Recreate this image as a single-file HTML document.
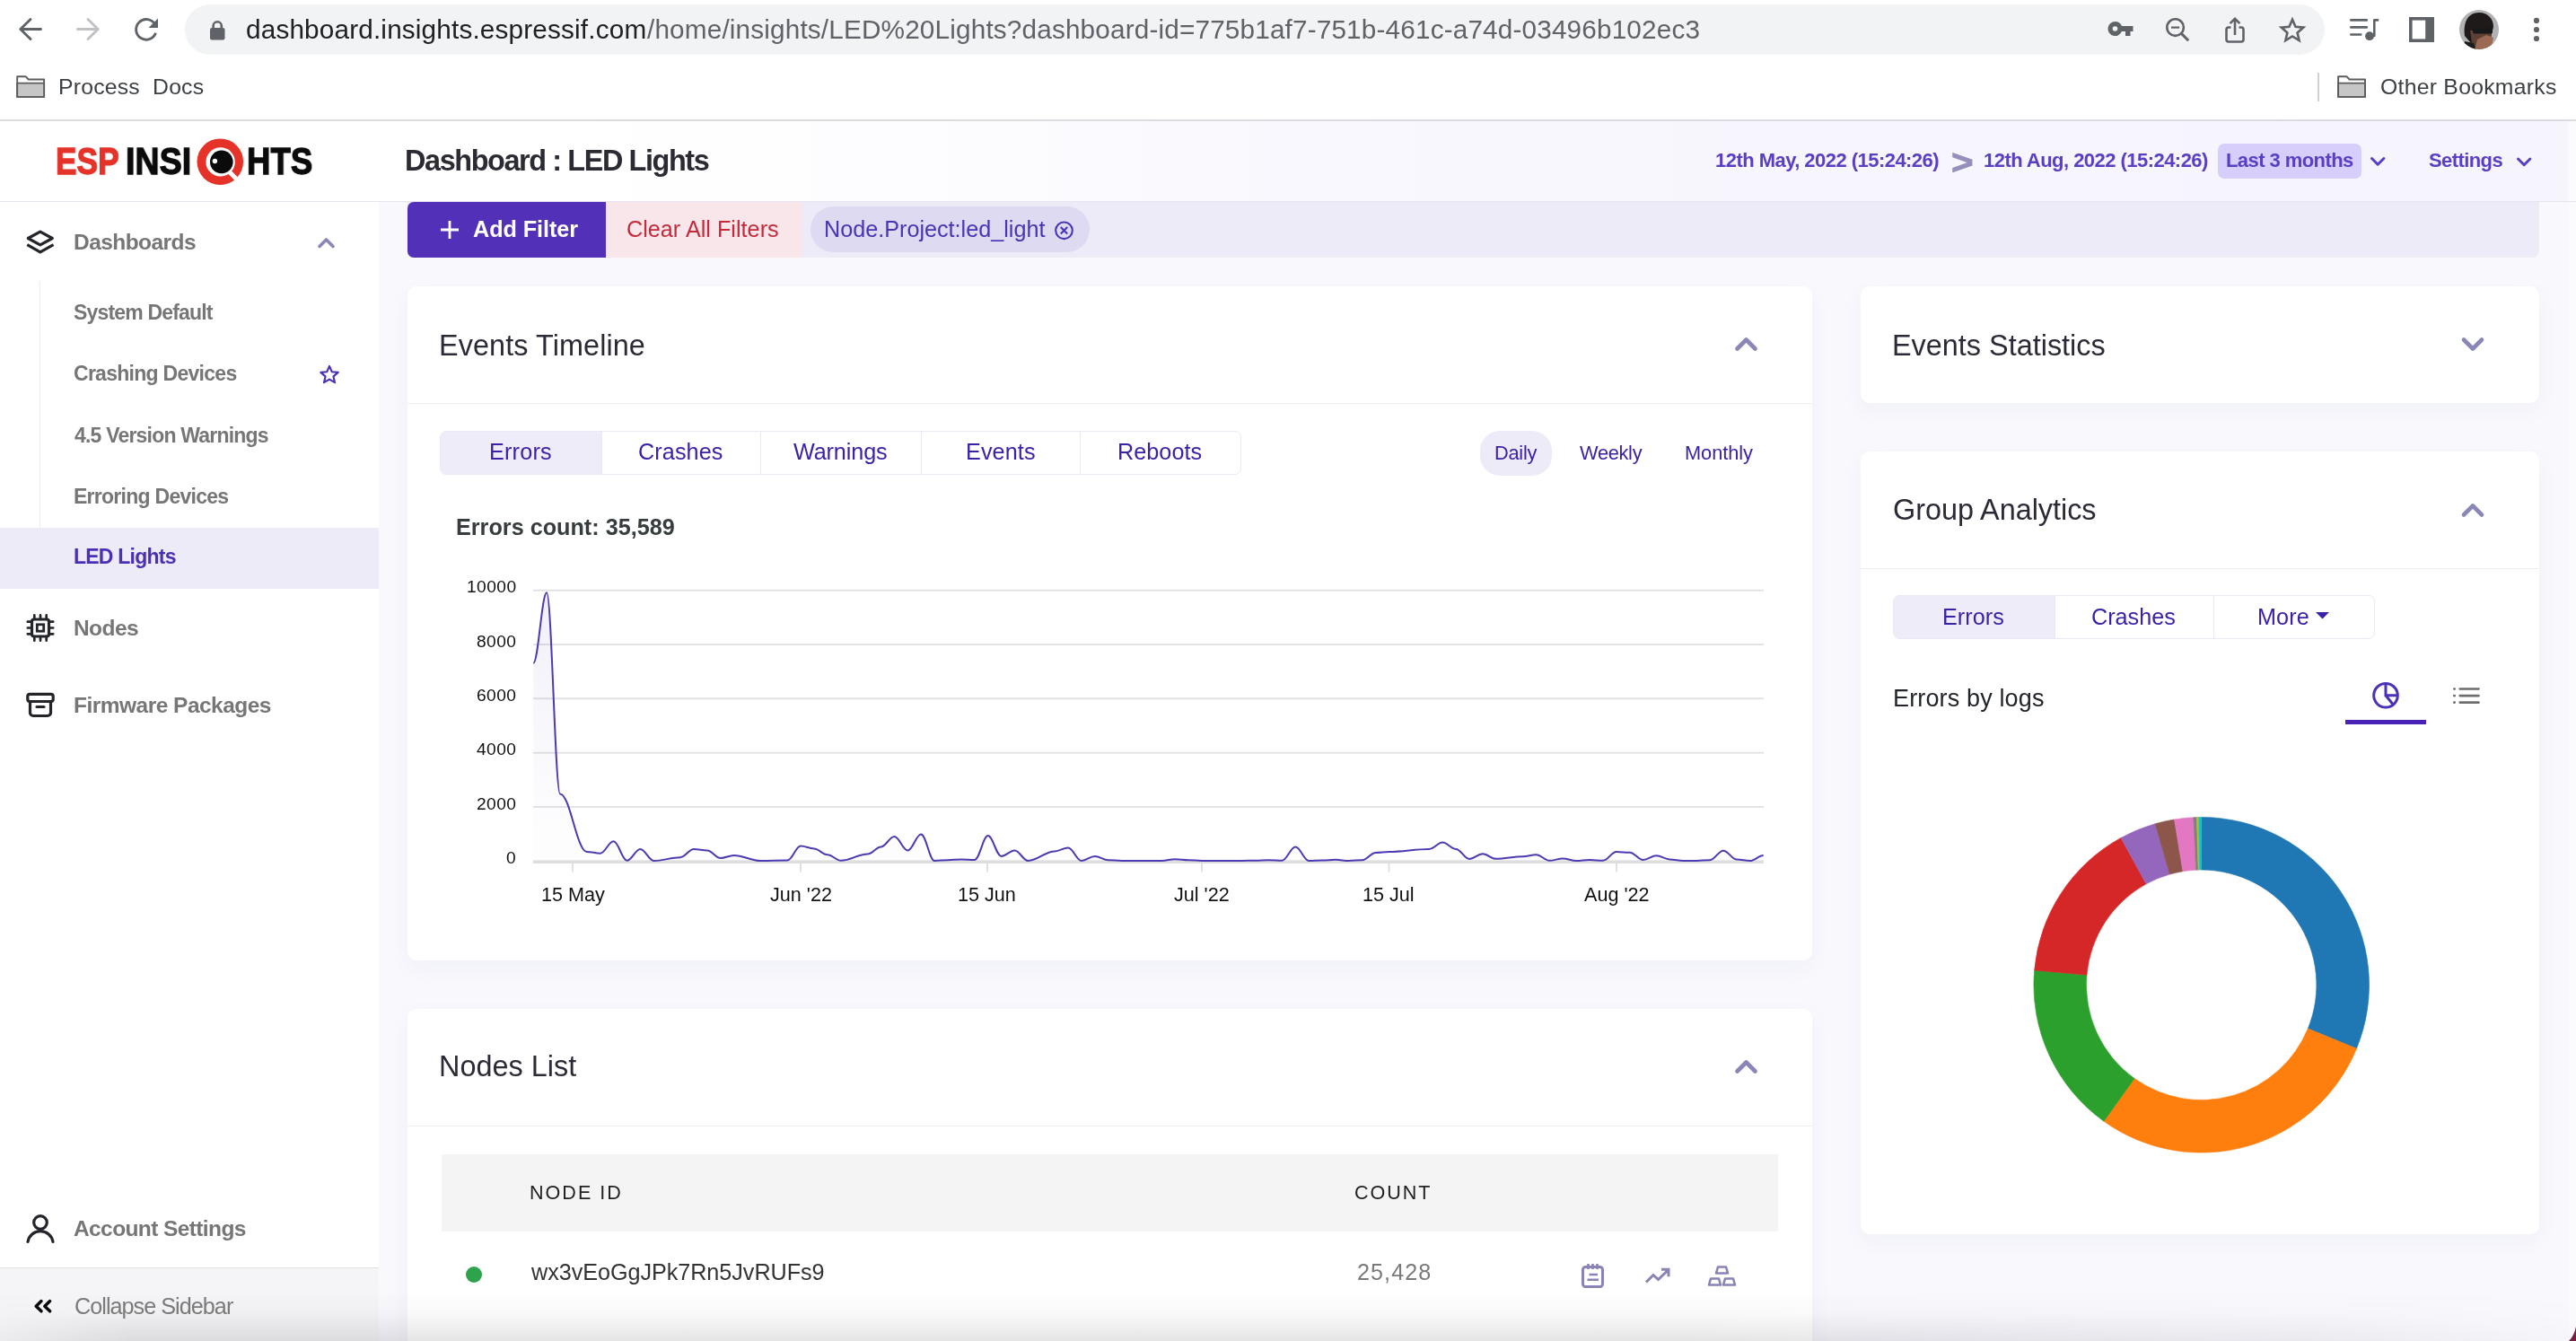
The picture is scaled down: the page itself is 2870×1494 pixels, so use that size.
<!DOCTYPE html>
<html lang="en">
<head>
<meta charset="utf-8">
<title>ESP Insights - Dashboard : LED Lights</title>
<style>
*{box-sizing:border-box}
html,body{margin:0;padding:0;width:2870px;height:1494px;overflow:hidden;background:#f8f8fd}
body{font-family:"Liberation Sans",sans-serif;position:relative}
.abs,.b,.t{position:absolute}
.t{white-space:pre;line-height:1;transform-origin:0 50%;will-change:transform}
.card{position:absolute;background:#fff;border-radius:10px;box-shadow:0 8px 26px rgba(60,60,130,.038)}
.hr{position:absolute;height:1px;background:#efeef5}
.tabs{position:absolute;border:1px solid #ebeaf3;border-radius:7px;background:#fff;overflow:hidden}
.tabs i{position:absolute;top:0;bottom:0;width:1px;background:#ebeaf4}
.tabs b{position:absolute;left:0;top:0;bottom:0;background:#eeecf9}
</style>
</head>
<body>
<!-- browser chrome -->
<div class="b" style="left:0;top:0;width:2870px;height:134px;background:#fff"></div>
<div class="b" style="left:206px;top:5px;width:2384px;height:56px;border-radius:28px;background:#f1f3f4"></div>
<div class="b" style="left:0;top:133px;width:2870px;height:2px;background:#dcdcde"></div>
<div class="b" style="left:2582px;top:81px;width:2px;height:32px;background:#d0d0d0"></div>

<!-- app header -->
<div class="b" style="left:0;top:135px;width:2870px;height:90px;background:linear-gradient(90deg,#fff 0,#fff 600px,#fdfdff 1000px,#f9f8fe 1435px,#f7f6fe 2000px,#f6f5fe 2861px,#fbfbfd 2861px)"></div>
<div class="b" style="left:0;top:223.5px;width:2870px;height:1.5px;background:#e6e5ef"></div>
<div class="b" style="left:2471px;top:160px;width:160px;height:39px;border-radius:7px;background:#d7cefb"></div>

<!-- sidebar -->
<div class="b" style="left:0;top:225px;width:422px;height:1269px;background:#fff"></div>
<div class="b" style="left:44px;top:314px;width:1px;height:274px;background:#ececf1"></div>
<div class="b" style="left:0;top:588px;width:422px;height:68px;background:#eeebf9"></div>
<div class="b" style="left:0;top:1412px;width:422px;height:82px;background:#f5f5f7;border-top:1.5px solid #e3e3e6"></div>

<!-- right gutter -->
<div class="b" style="left:2861px;top:225px;width:9px;height:1269px;background:#fbfbfe"></div>

<!-- filter bar -->
<div class="b" style="left:454px;top:225px;width:2375px;height:62px;border-radius:0 0 8px 8px;background:#edebf8"></div>
<div class="b" style="left:675px;top:225px;width:219px;height:62px;background:#f8e6ea"></div>
<div class="b" style="left:454px;top:225px;width:221px;height:62px;border-radius:7px 0 0 7px;background:#5330b8"></div>
<div class="b" style="left:903px;top:230px;width:311px;height:51px;border-radius:26px;background:#dddaf1"></div>

<!-- cards -->
<div class="card" style="left:454px;top:319px;width:1565px;height:751px"></div>
<div class="hr" style="left:454px;top:448.5px;width:1565px"></div>
<div class="tabs" style="left:490px;top:480px;width:892.5px;height:48.5px"><b style="width:179.5px"></b><i style="left:178px"></i><i style="left:356px"></i><i style="left:534.5px"></i><i style="left:712px"></i></div>
<div class="b" style="left:1649px;top:480px;width:80px;height:49.5px;border-radius:22px;background:#eeebf9"></div>

<div class="card" style="left:2073px;top:319px;width:756px;height:130px"></div>
<div class="card" style="left:2073px;top:502.5px;width:756px;height:872.5px"></div>
<div class="hr" style="left:2073px;top:632.5px;width:756px"></div>
<div class="tabs" style="left:2109px;top:663px;width:536.5px;height:48.5px"><b style="width:180px"></b><i style="left:178.5px"></i><i style="left:356px"></i></div>
<div class="b" style="left:2613px;top:802px;width:90px;height:5px;background:#4a22b5"></div>

<div class="card" style="left:454px;top:1124px;width:1565px;height:420px"></div>
<div class="hr" style="left:454px;top:1254px;width:1565px"></div>
<div class="b" style="left:492px;top:1286px;width:1489px;height:86px;background:#f4f4f5"></div>
<div class="b" style="left:519px;top:1411px;width:18px;height:18px;border-radius:50%;background:#2fa24c"></div>

<svg class="abs" style="left:0;top:0" width="2870" height="1494" viewBox="0 0 2870 1494"><defs><linearGradient id="ag" x1="0" y1="0" x2="0" y2="1"><stop offset="0" stop-color="#4a3aad" stop-opacity="0.075"/><stop offset="0.9" stop-color="#4a3aad" stop-opacity="0.01"/></linearGradient></defs><rect x="594" y="898.1" width="1371" height="1.8" fill="#e0e0e3"/><rect x="594" y="837.8" width="1371" height="1.8" fill="#e0e0e3"/><rect x="594" y="777.4" width="1371" height="1.8" fill="#e0e0e3"/><rect x="594" y="717.1" width="1371" height="1.8" fill="#e0e0e3"/><rect x="594" y="656.8" width="1371" height="1.8" fill="#e0e0e3"/><rect x="594" y="958.4" width="1371" height="3.6" fill="#dedede"/><rect x="637.1" y="961" width="1.8" height="10.5" fill="#dedede"/><rect x="891.1" y="961" width="1.8" height="10.5" fill="#dedede"/><rect x="1099.1" y="961" width="1.8" height="10.5" fill="#dedede"/><rect x="1338.1" y="961" width="1.8" height="10.5" fill="#dedede"/><rect x="1546.6" y="961" width="1.8" height="10.5" fill="#dedede"/><rect x="1800.1" y="961" width="1.8" height="10.5" fill="#dedede"/><path d="M594.2 738.8C599.7 738.8 603.6 660.3 609.1 660.3C614.6 660.3 618.5 884.4 624.0 884.4C635.0 884.4 642.8 949.0 653.8 949.0C659.3 949.0 663.2 950.7 668.7 950.7C674.2 950.7 678.1 937.3 683.6 937.3C689.1 937.3 693.0 958.7 698.5 958.7C704.0 958.7 707.9 945.9 713.4 945.9C718.9 945.9 722.8 959.0 728.3 959.0C739.3 959.0 747.0 955.2 758.1 955.2C763.6 955.2 767.4 945.9 773.0 945.9C778.5 945.9 782.3 947.5 787.9 947.5C793.4 947.5 797.2 956.0 802.8 956.0C808.3 956.0 812.1 952.9 817.7 952.9C828.7 952.9 836.4 959.0 847.4 959.0C858.5 959.0 866.2 958.6 877.2 958.6C882.8 958.6 886.6 942.6 892.1 942.6C897.7 942.6 901.5 945.5 907.0 945.5C912.5 945.5 916.4 952.3 921.9 952.3C927.4 952.3 931.3 958.8 936.8 958.8C947.9 958.8 955.6 951.5 966.6 951.5C972.1 951.5 976.0 943.4 981.5 943.4C987.0 943.4 990.9 932.1 996.4 932.1C1001.9 932.1 1005.8 947.5 1011.3 947.5C1016.8 947.5 1020.7 929.5 1026.2 929.5C1031.7 929.5 1035.6 959.0 1041.1 959.0C1046.6 959.0 1050.5 958.2 1056.0 958.2C1061.5 958.2 1065.4 957.4 1070.9 957.4C1076.4 957.4 1080.3 958.1 1085.8 958.1C1091.3 958.1 1095.2 931.1 1100.7 931.1C1106.2 931.1 1110.1 953.9 1115.6 953.9C1121.1 953.9 1125.0 947.5 1130.5 947.5C1136.0 947.5 1139.9 959.0 1145.4 959.0C1156.4 959.0 1164.1 948.4 1175.2 948.4C1180.7 948.4 1184.6 944.5 1190.1 944.5C1195.6 944.5 1199.4 959.0 1205.0 959.0C1210.5 959.0 1214.3 953.9 1219.9 953.9C1225.4 953.9 1229.2 958.2 1234.8 958.2C1240.3 958.2 1244.1 959.0 1249.7 959.0C1266.2 959.0 1277.8 959.0 1294.3 959.0C1299.9 959.0 1303.7 957.2 1309.2 957.2C1314.8 957.2 1318.6 958.2 1324.1 958.2C1329.7 958.2 1333.5 959.0 1339.0 959.0C1355.6 959.0 1367.2 959.0 1383.7 959.0C1389.2 959.0 1393.1 958.7 1398.6 958.7C1404.1 958.7 1408.0 958.2 1413.5 958.2C1419.0 958.2 1422.9 958.7 1428.4 958.7C1433.9 958.7 1437.8 943.4 1443.3 943.4C1448.8 943.4 1452.7 959.0 1458.2 959.0C1463.7 959.0 1467.6 958.6 1473.1 958.6C1478.6 958.6 1482.5 957.8 1488.0 957.8C1493.5 957.8 1497.4 959.0 1502.9 959.0C1508.4 959.0 1512.3 958.2 1517.8 958.2C1523.3 958.2 1527.2 949.9 1532.7 949.9C1538.2 949.9 1542.1 948.9 1547.6 948.9C1564.1 948.9 1575.7 945.9 1592.3 945.9C1597.8 945.9 1601.7 938.6 1607.2 938.6C1612.7 938.6 1616.6 945.9 1622.1 945.9C1627.6 945.9 1631.5 957.0 1637.0 957.0C1642.5 957.0 1646.4 951.3 1651.9 951.3C1657.4 951.3 1661.2 956.8 1666.8 956.8C1677.8 956.8 1685.5 954.3 1696.6 954.3C1702.1 954.3 1705.9 952.3 1711.5 952.3C1717.0 952.3 1720.8 958.8 1726.4 958.8C1731.9 958.8 1735.7 956.4 1741.2 956.4C1746.8 956.4 1750.6 959.0 1756.1 959.0C1761.7 959.0 1765.5 958.0 1771.0 958.0C1776.6 958.0 1780.4 958.8 1785.9 958.8C1791.5 958.8 1795.3 949.1 1800.8 949.1C1806.4 949.1 1810.2 949.7 1815.7 949.7C1821.2 949.7 1825.1 958.0 1830.6 958.0C1836.1 958.0 1840.0 953.3 1845.5 953.3C1851.0 953.3 1854.9 957.4 1860.4 957.4C1865.9 957.4 1869.8 959.0 1875.3 959.0C1880.8 959.0 1884.7 959.0 1890.2 959.0C1895.7 959.0 1899.6 958.2 1905.1 958.2C1910.6 958.2 1914.5 947.7 1920.0 947.7C1925.5 947.7 1929.4 957.6 1934.9 957.6C1940.4 957.6 1944.3 959.0 1949.8 959.0C1955.3 959.0 1959.2 953.1 1964.7 953.1L1964.7 959.0L594.2 959.0Z" fill="url(#ag)"/><path d="M594.2 738.8C599.7 738.8 603.6 660.3 609.1 660.3C614.6 660.3 618.5 884.4 624.0 884.4C635.0 884.4 642.8 949.0 653.8 949.0C659.3 949.0 663.2 950.7 668.7 950.7C674.2 950.7 678.1 937.3 683.6 937.3C689.1 937.3 693.0 958.7 698.5 958.7C704.0 958.7 707.9 945.9 713.4 945.9C718.9 945.9 722.8 959.0 728.3 959.0C739.3 959.0 747.0 955.2 758.1 955.2C763.6 955.2 767.4 945.9 773.0 945.9C778.5 945.9 782.3 947.5 787.9 947.5C793.4 947.5 797.2 956.0 802.8 956.0C808.3 956.0 812.1 952.9 817.7 952.9C828.7 952.9 836.4 959.0 847.4 959.0C858.5 959.0 866.2 958.6 877.2 958.6C882.8 958.6 886.6 942.6 892.1 942.6C897.7 942.6 901.5 945.5 907.0 945.5C912.5 945.5 916.4 952.3 921.9 952.3C927.4 952.3 931.3 958.8 936.8 958.8C947.9 958.8 955.6 951.5 966.6 951.5C972.1 951.5 976.0 943.4 981.5 943.4C987.0 943.4 990.9 932.1 996.4 932.1C1001.9 932.1 1005.8 947.5 1011.3 947.5C1016.8 947.5 1020.7 929.5 1026.2 929.5C1031.7 929.5 1035.6 959.0 1041.1 959.0C1046.6 959.0 1050.5 958.2 1056.0 958.2C1061.5 958.2 1065.4 957.4 1070.9 957.4C1076.4 957.4 1080.3 958.1 1085.8 958.1C1091.3 958.1 1095.2 931.1 1100.7 931.1C1106.2 931.1 1110.1 953.9 1115.6 953.9C1121.1 953.9 1125.0 947.5 1130.5 947.5C1136.0 947.5 1139.9 959.0 1145.4 959.0C1156.4 959.0 1164.1 948.4 1175.2 948.4C1180.7 948.4 1184.6 944.5 1190.1 944.5C1195.6 944.5 1199.4 959.0 1205.0 959.0C1210.5 959.0 1214.3 953.9 1219.9 953.9C1225.4 953.9 1229.2 958.2 1234.8 958.2C1240.3 958.2 1244.1 959.0 1249.7 959.0C1266.2 959.0 1277.8 959.0 1294.3 959.0C1299.9 959.0 1303.7 957.2 1309.2 957.2C1314.8 957.2 1318.6 958.2 1324.1 958.2C1329.7 958.2 1333.5 959.0 1339.0 959.0C1355.6 959.0 1367.2 959.0 1383.7 959.0C1389.2 959.0 1393.1 958.7 1398.6 958.7C1404.1 958.7 1408.0 958.2 1413.5 958.2C1419.0 958.2 1422.9 958.7 1428.4 958.7C1433.9 958.7 1437.8 943.4 1443.3 943.4C1448.8 943.4 1452.7 959.0 1458.2 959.0C1463.7 959.0 1467.6 958.6 1473.1 958.6C1478.6 958.6 1482.5 957.8 1488.0 957.8C1493.5 957.8 1497.4 959.0 1502.9 959.0C1508.4 959.0 1512.3 958.2 1517.8 958.2C1523.3 958.2 1527.2 949.9 1532.7 949.9C1538.2 949.9 1542.1 948.9 1547.6 948.9C1564.1 948.9 1575.7 945.9 1592.3 945.9C1597.8 945.9 1601.7 938.6 1607.2 938.6C1612.7 938.6 1616.6 945.9 1622.1 945.9C1627.6 945.9 1631.5 957.0 1637.0 957.0C1642.5 957.0 1646.4 951.3 1651.9 951.3C1657.4 951.3 1661.2 956.8 1666.8 956.8C1677.8 956.8 1685.5 954.3 1696.6 954.3C1702.1 954.3 1705.9 952.3 1711.5 952.3C1717.0 952.3 1720.8 958.8 1726.4 958.8C1731.9 958.8 1735.7 956.4 1741.2 956.4C1746.8 956.4 1750.6 959.0 1756.1 959.0C1761.7 959.0 1765.5 958.0 1771.0 958.0C1776.6 958.0 1780.4 958.8 1785.9 958.8C1791.5 958.8 1795.3 949.1 1800.8 949.1C1806.4 949.1 1810.2 949.7 1815.7 949.7C1821.2 949.7 1825.1 958.0 1830.6 958.0C1836.1 958.0 1840.0 953.3 1845.5 953.3C1851.0 953.3 1854.9 957.4 1860.4 957.4C1865.9 957.4 1869.8 959.0 1875.3 959.0C1880.8 959.0 1884.7 959.0 1890.2 959.0C1895.7 959.0 1899.6 958.2 1905.1 958.2C1910.6 958.2 1914.5 947.7 1920.0 947.7C1925.5 947.7 1929.4 957.6 1934.9 957.6C1940.4 957.6 1944.3 959.0 1949.8 959.0C1955.3 959.0 1959.2 953.1 1964.7 953.1" fill="none" stroke="#4b3bb3" stroke-width="2" stroke-linejoin="round"/></svg>
<svg class="abs" style="left:0;top:0" width="2870" height="1494" viewBox="0 0 2870 1494"><path d="M2452.70 910.50A186.8 186.8 0 0 1 2625.53 1168.18L2571.31 1145.95A128.2 128.2 0 0 0 2452.70 969.10Z" fill="#1f77b4" stroke="#1f77b4" stroke-width="0.6" stroke-linejoin="round"/><path d="M2625.53 1168.18A186.8 186.8 0 0 1 2343.96 1249.19L2378.07 1201.54A128.2 128.2 0 0 0 2571.31 1145.95Z" fill="#ff7f0e" stroke="#ff7f0e" stroke-width="0.6" stroke-linejoin="round"/><path d="M2343.96 1249.19A186.8 186.8 0 0 1 2266.61 1081.02L2324.99 1086.13A128.2 128.2 0 0 0 2378.07 1201.54Z" fill="#2ca02c" stroke="#2ca02c" stroke-width="0.6" stroke-linejoin="round"/><path d="M2266.61 1081.02A186.8 186.8 0 0 1 2362.99 933.45L2391.14 984.85A128.2 128.2 0 0 0 2324.99 1086.13Z" fill="#d62728" stroke="#d62728" stroke-width="0.6" stroke-linejoin="round"/><path d="M2362.99 933.45A186.8 186.8 0 0 1 2401.21 917.74L2417.36 974.07A128.2 128.2 0 0 0 2391.14 984.85Z" fill="#9467bd" stroke="#9467bd" stroke-width="0.6" stroke-linejoin="round"/><path d="M2401.21 917.74A186.8 186.8 0 0 1 2422.51 912.96L2431.98 970.79A128.2 128.2 0 0 0 2417.36 974.07Z" fill="#8c564b" stroke="#8c564b" stroke-width="0.6" stroke-linejoin="round"/><path d="M2422.51 912.96A186.8 186.8 0 0 1 2443.90 910.71L2446.66 969.24A128.2 128.2 0 0 0 2431.98 970.79Z" fill="#e377c2" stroke="#e377c2" stroke-width="0.6" stroke-linejoin="round"/><path d="M2443.90 910.71A186.8 186.8 0 0 1 2447.48 910.57L2449.12 969.15A128.2 128.2 0 0 0 2446.66 969.24Z" fill="#7f7f7f" stroke="#7f7f7f" stroke-width="0.6" stroke-linejoin="round"/><path d="M2447.48 910.57A186.8 186.8 0 0 1 2449.77 910.52L2450.69 969.12A128.2 128.2 0 0 0 2449.12 969.15Z" fill="#bcbd22" stroke="#bcbd22" stroke-width="0.6" stroke-linejoin="round"/><path d="M2449.77 910.52A186.8 186.8 0 0 1 2452.70 910.50L2452.70 969.10A128.2 128.2 0 0 0 2450.69 969.12Z" fill="#17becf" stroke="#17becf" stroke-width="0.6" stroke-linejoin="round"/></svg>

<!-- icons -->
<svg class="abs" style="left:0;top:0" width="2870" height="1494" viewBox="0 0 2870 1494" fill="none">
<!-- browser nav -->
<g stroke="#5f6368" stroke-width="2.900" stroke-linecap="round" stroke-linejoin="round">
<path d="M45.500 32.500H23M34 21.500L22.800 32.500L34 43.500"/>
<path d="M172.600 27A11.300 11.300 0 1 0 173.500 36.800" stroke-linecap="butt"/>
</g>
<path d="M176 20.500v10.500h-10.500z" fill="#5f6368"/>
<path d="M86.500 32.500H109M98 21.500L109.200 32.500L98 43.500" stroke="#bfc1c4" stroke-width="2.900" stroke-linecap="round" stroke-linejoin="round"/>
<!-- lock -->
<rect x="234" y="31" width="16.5" height="13.5" rx="2.2" fill="#5f6368"/>
<path d="M237.6 32v-3.2a4.6 4.6 0 0 1 9.2 0V32" stroke="#5f6368" stroke-width="2.6"/>
<!-- key -->
<path d="M2356.5 24a8 8 0 1 0 7.4 11H2368v5h5.5v-5h3V29h-12.6A8 8 0 0 0 2356.5 24zm0 5.2a2.8 2.8 0 1 1 0 5.6a2.8 2.8 0 0 1 0-5.6z" fill="#5f6368" fill-rule="evenodd"/>
<!-- zoom out -->
<g stroke="#5f6368" stroke-width="2.600"><circle cx="2423.600" cy="30.600" r="9.300"/><path d="M2430.400 37.400l7.800 7.800" stroke-width="3"/><path d="M2419 30.600h9.200" stroke-width="2.200"/></g>
<!-- share -->
<g stroke="#5f6368" stroke-width="2.6"><path d="M2485.5 30.5H2483a2.5 2.5 0 0 0-2.5 2.5v11a2.5 2.5 0 0 0 2.5 2.5h14a2.5 2.5 0 0 0 2.5-2.5V33a2.5 2.5 0 0 0-2.5-2.5h-2.500"/><path d="M2490 39V21M2484.600 26.200L2490 20.800L2495.400 26.200"/></g>
<!-- star -->
<path d="M2554 21.700l3.500 8.150 8.800 .75-6.700 5.800 2 8.650-7.600-4.600-7.600 4.600 2-8.650-6.700-5.800 8.800-.75z" stroke="#5f6368" stroke-width="2.600" stroke-linejoin="miter"/>
<!-- playlist -->
<g stroke="#5f6368" stroke-width="2.600" stroke-linecap="round"><path d="M2619.300 22.400h17.500M2619.300 30.400h17.500M2619.300 38.500h11"/><path d="M2645.300 40V22.400h3.800" stroke-linejoin="round"/></g>
<circle cx="2640" cy="40.200" r="4.900" fill="#5f6368"/>
<!-- side panel -->
<rect x="2685.800" y="20.800" width="24.400" height="24.400" stroke="#5f6368" stroke-width="3.600"/><rect x="2702.200" y="19" width="9.800" height="28" fill="#5f6368"/>
<!-- avatar -->
<clipPath id="av"><circle cx="2762" cy="33" r="22"/></clipPath>
<g clip-path="url(#av)"><rect x="2740" y="11" width="44" height="44" fill="#b2b2b5"/><path d="M2746 40c-2-14 3-26 16-26c10 0 16 7 16 16l-3 12-22 6z" fill="#1d1a19"/><path d="M2752 34h24l-1 10-8 10h-12z" fill="#5e4034"/><rect x="2755" y="31.500" width="22" height="6" rx="2.500" fill="#15191a"/><path d="M2742 56l4-10 10 2 3 8z" fill="#1c1c1e"/><path d="M2757 56l3-12 10-5 8 3-2 10-6 4z" fill="#9a6a55"/></g>
<!-- dots -->
<g fill="#5f6368"><circle cx="2826" cy="22.900" r="3.100"/><circle cx="2826" cy="33" r="3.100"/><circle cx="2826" cy="43" r="3.100"/></g>
<!-- bookmark folders -->
<g stroke="#5c5c5c" stroke-width="1.900" stroke-linejoin="round"><path d="M19.200 85.200h9.300l3.200 3.300h17.400v19.400h-29.900z" fill="#fff"/><path d="M19.200 92.600h29.900v15.300h-29.900z" fill="#c6c6c6"/></g>
<g stroke="#5c5c5c" stroke-width="1.900" stroke-linejoin="round" transform="translate(2585.900 0)"><path d="M19.200 85.200h9.300l3.200 3.300h17.400v19.400h-29.900z" fill="#fff"/><path d="M19.200 92.600h29.900v15.300h-29.900z" fill="#c6c6c6"/></g>

<!-- logo magnifier -->
<circle cx="245.300" cy="180.200" r="25.800" fill="#e5332a"/>
<circle cx="245.600" cy="180.400" r="16.200" fill="#fff"/>
<path d="M255.500 191.500l9.500 9.500" stroke="#fff" stroke-width="5"/>
<circle cx="246.800" cy="180.400" r="12.800" fill="#0b0b0b"/>
<circle cx="239.400" cy="179.500" r="2.700" fill="#fff"/>

<!-- sidebar icons -->
<g stroke="#23252b" stroke-width="3.200" stroke-linejoin="miter">
<path d="M44.800 258.100L58.300 265.500L44.800 272.900L31.300 265.500Z" stroke-linejoin="round"/><path d="M30.300 272.700L44.800 280.900L59.500 272.700" stroke-linejoin="round"/>
<rect x="35.500" y="690" width="19" height="19" rx="2.500"/><rect x="41.300" y="695.800" width="7.400" height="7.400" stroke-width="2.800"/>
<path d="M38.300 685.300v4.500M45 685.300v4.500M51.700 685.300v4.500M38.300 709.200v4.500M45 709.200v4.500M51.700 709.200v4.500M30.800 692.700h4.500M30.800 699.500h4.500M30.800 706.300h4.500M54.700 692.700h4.500M54.700 699.500h4.500M54.700 706.300h4.500" stroke-width="2.700" stroke-linecap="round"/>
<rect x="30.800" y="773.300" width="28.400" height="8.200" rx="2.500"/><path d="M33.500 782v12a3.500 3.500 0 0 0 3.500 3.500h16a3.500 3.500 0 0 0 3.500-3.500v-12"/><path d="M41 787.500h8" stroke-linecap="round"/>
<circle cx="45" cy="1362" r="7.300"/><path d="M31 1383.500a14.200 14.200 0 0 1 28 0" stroke-linecap="round"/>
</g>
<path d="M46 1449.600L40.200 1455.200L46 1460.800M55.600 1449.600L49.800 1455.200L55.600 1460.800" stroke="#0a0a0a" stroke-width="3.500" stroke-linecap="round" stroke-linejoin="round"/>
<path d="M356 274.500L363.500 267L371 274.500" stroke="#8b86b8" stroke-width="3.600" stroke-linecap="round" stroke-linejoin="round"/>
<path d="M367 407.900l2.800 6.350 6.900 .6-5.250 4.550 1.600 6.750-6.050-3.600-6.050 3.600 1.600-6.750-5.250-4.550 6.900-.6z" stroke="#4b2fb5" stroke-width="2.100" stroke-linejoin="round"/>

<!-- filter bar icons -->
<path d="M501 246v20M491 256h20" stroke="#fff" stroke-width="2.800"/>
<g stroke="#4b33b5" stroke-width="2.100"><circle cx="1185.500" cy="256.800" r="9.300"/><path d="M1181.800 253.100l7.400 7.400M1189.200 253.100l-7.400 7.400"/></g>
<!-- header chevrons -->
<g stroke="#5a3ec3" stroke-width="3" stroke-linecap="round" stroke-linejoin="round"><path d="M2642.500 176.500l6.700 6.700 6.700-6.700"/><path d="M2805.500 177l6.700 6.700 6.700-6.700"/></g>

<!-- card chevrons -->
<g stroke="#8b86b8" stroke-width="4.600" stroke-linecap="round" stroke-linejoin="round">
<path d="M1935.500 388.500l10-10 10 10"/><path d="M2745 378.500l10 10 10-10"/><path d="M2745 573.500l10-10 10 10"/><path d="M1935.500 1193.500l10-10 10 10"/>
</g>
<!-- more caret -->
<path d="M2580 682h15l-7.500 7.500z" fill="#3c21a8"/>
<!-- pie / list -->
<g stroke="#4d30b8" stroke-width="3"><circle cx="2658" cy="774.800" r="13.300"/><path d="M2658 761.500v13.300h13.300M2658 774.800l8.500 10.500"/></g>
<g stroke="#6e6e6e" stroke-width="2.700" stroke-linecap="round"><path d="M2740.700 767.500h20.800M2740.700 775.050h20.800M2740.700 782.600h20.800M2734.300 767.500h.4M2734.300 775.050h.4M2734.300 782.600h.4"/></g>
<!-- row icons -->
<g stroke="#8983b7" stroke-width="3" stroke-linejoin="round">
<rect x="1763.500" y="1411.500" width="22" height="22" rx="3"/><path d="M1769.500 1408v6M1774.500 1408v6M1779.500 1408v6M1770.500 1420h9.500M1768.500 1425.800h12.500" stroke-width="2.600"/>
<path d="M1834 1428.500l8-8 5.500 5 11-10.500M1851 1414.200h8v8" stroke-linejoin="miter"/>
<path d="M1914 1411.500h9l2 7h-13zM1906 1424.500h9l2 7h-13zM1922 1424.500h9l2 7h-13z" stroke-width="2.600"/>
</g>
<!-- window corner -->
<path d="M2870 1478v16h-8q6-6 8-16z" fill="#7a1f45"/>
</svg>

<!-- bottom fade -->
<div class="b" style="left:0;top:1436px;width:2870px;height:58px;background:linear-gradient(180deg,rgba(40,40,50,0) 0,rgba(40,40,50,.025) 45%,rgba(40,40,50,.12) 100%);-webkit-mask-image:linear-gradient(90deg,rgba(0,0,0,.35) 0,#000 5%,#000 65%,rgba(0,0,0,.55) 90%,rgba(0,0,0,.1) 100%)"></div>

<span class="t" style="left:273.86px;top:19px;font-size:28.6px;color:#202124;letter-spacing:0.150px;transform:scaleX(1.0400);">dashboard.insights.espressif.com</span>
<span class="t" style="left:720.90px;top:19px;font-size:28.6px;color:#5f6368;letter-spacing:0.146px;transform:scaleX(1.0400);">/home/insights/LED%20Lights?dashboard-id=775b1af7-751b-461c-a74d-03496b102ec3</span>
<span class="t" style="left:65.40px;top:86px;font-size:23.6px;color:#3c4043;letter-spacing:0.190px;transform:scaleX(1.0500);">Process  Docs</span>
<span class="t" style="left:2652.25px;top:86px;font-size:23.6px;color:#3c4043;letter-spacing:0.241px;transform:scaleX(1.0500);">Other Bookmarks</span>
<span class="t" style="left:62.17px;top:159px;font-size:42.5px;color:#e5332a;font-weight:700;transform:scaleX(0.8303);-webkit-text-stroke:1.3px #e5332a;">ESP</span>
<span class="t" style="left:140.40px;top:159px;font-size:42.5px;color:#0b0b0b;font-weight:700;transform:scaleX(0.8860);-webkit-text-stroke:1.3px #0b0b0b;">INSI</span>
<span class="t" style="left:275.40px;top:159px;font-size:42.5px;color:#0b0b0b;font-weight:700;transform:scaleX(0.8610);-webkit-text-stroke:1.3px #0b0b0b;">HTS</span>
<span class="t" style="left:451.40px;top:163px;font-size:32.4px;color:#2b2b33;font-weight:700;letter-spacing:-1.387px;">Dashboard : LED Lights</span>
<span class="t" style="left:1911.46px;top:168px;font-size:22px;color:#5a3ec3;font-weight:700;letter-spacing:-0.538px;">12th May, 2022 (15:24:26)</span>
<span class="t" style="left:2174.16px;top:162px;font-size:38px;color:#9590bb;font-weight:700;transform:scaleX(1.1134);-webkit-text-stroke:.8px #9590bb;">&gt;</span>
<span class="t" style="left:2209.96px;top:168px;font-size:22px;color:#5a3ec3;font-weight:700;letter-spacing:-0.538px;">12th Aug, 2022 (15:24:26)</span>
<span class="t" style="left:2480.39px;top:168px;font-size:22px;color:#5a3ec3;font-weight:700;letter-spacing:-0.571px;">Last 3 months</span>
<span class="t" style="left:2706.40px;top:168px;font-size:22px;color:#5a3ec3;font-weight:700;letter-spacing:-0.584px;">Settings</span>
<span class="t" style="left:82.13px;top:258px;font-size:24.5px;color:#767676;font-weight:700;letter-spacing:-0.556px;">Dashboards</span>
<span class="t" style="left:82.40px;top:337px;font-size:23px;color:#767676;font-weight:700;letter-spacing:-0.827px;">System Default</span>
<span class="t" style="left:82.40px;top:405px;font-size:23px;color:#767676;font-weight:700;letter-spacing:-0.722px;">Crashing Devices</span>
<span class="t" style="left:83.29px;top:474px;font-size:23px;color:#767676;font-weight:700;letter-spacing:-0.797px;">4.5 Version Warnings</span>
<span class="t" style="left:81.94px;top:542px;font-size:23px;color:#767676;font-weight:700;letter-spacing:-0.735px;">Erroring Devices</span>
<span class="t" style="left:81.94px;top:609px;font-size:23px;color:#4b2fb5;font-weight:700;letter-spacing:-0.773px;">LED Lights</span>
<span class="t" style="left:82.13px;top:688px;font-size:24.5px;color:#767676;font-weight:700;letter-spacing:-0.578px;">Nodes</span>
<span class="t" style="left:82.13px;top:774px;font-size:24.5px;color:#767676;font-weight:700;letter-spacing:-0.519px;">Firmware Packages</span>
<span class="t" style="left:82.09px;top:1357px;font-size:24.5px;color:#767676;font-weight:700;letter-spacing:-0.602px;">Account Settings</span>
<span class="t" style="left:83.48px;top:1443px;font-size:25.2px;color:#7a7a7a;letter-spacing:-0.969px;">Collapse Sidebar</span>
<span class="t" style="left:527.13px;top:243px;font-size:25.2px;color:#ffffff;font-weight:700;letter-spacing:-0.058px;">Add Filter</span>
<span class="t" style="left:698.38px;top:243px;font-size:25.2px;color:#c52a3a;letter-spacing:0.018px;">Clear All Filters</span>
<span class="t" style="left:918.40px;top:243px;font-size:25.2px;color:#4b33b5;">Node.Project:led_light</span>
<span class="t" style="left:489.21px;top:369px;font-size:32.4px;color:#2a2b36;letter-spacing:0.086px;">Events Timeline</span>
<span class="t" style="left:2108.26px;top:369px;font-size:32.4px;color:#2a2b36;letter-spacing:0.004px;">Events Statistics</span>
<span class="t" style="left:2109.32px;top:552px;font-size:32.4px;color:#2a2b36;letter-spacing:-0.021px;">Group Analytics</span>
<span class="t" style="left:489.26px;top:1172px;font-size:32.4px;color:#2a2b36;letter-spacing:0.021px;">Nodes List</span>
<span class="t" style="left:544.65px;top:491px;font-size:25.2px;color:#3c21a8;letter-spacing:0.206px;">Errors</span>
<span class="t" style="left:711.08px;top:491px;font-size:25.2px;color:#3c21a8;letter-spacing:0.097px;">Crashes</span>
<span class="t" style="left:884.48px;top:491px;font-size:25.2px;color:#3c21a8;letter-spacing:-0.120px;">Warnings</span>
<span class="t" style="left:1076.20px;top:491px;font-size:25.2px;color:#3c21a8;letter-spacing:0.099px;">Events</span>
<span class="t" style="left:1245.40px;top:491px;font-size:25.2px;color:#3c21a8;letter-spacing:0.053px;">Reboots</span>
<span class="t" style="left:1665.08px;top:494px;font-size:21.8px;color:#3c21a8;letter-spacing:-0.250px;">Daily</span>
<span class="t" style="left:1760.04px;top:494px;font-size:21.8px;color:#3c21a8;letter-spacing:-0.302px;">Weekly</span>
<span class="t" style="left:1876.58px;top:494px;font-size:21.8px;color:#3c21a8;letter-spacing:-0.065px;">Monthly</span>
<span class="t" style="left:507.77px;top:575px;font-size:25.2px;color:#373d3f;font-weight:700;letter-spacing:0.009px;">Errors count: 35,589</span>
<span class="t" style="left:564.40px;top:946px;font-size:19.2px;color:#111111;letter-spacing:0.450px;">0</span>
<span class="t" style="left:531.40px;top:886px;font-size:19.2px;color:#111111;letter-spacing:0.450px;">2000</span>
<span class="t" style="left:531.40px;top:825px;font-size:19.2px;color:#111111;letter-spacing:0.450px;">4000</span>
<span class="t" style="left:531.40px;top:765px;font-size:19.2px;color:#111111;letter-spacing:0.450px;">6000</span>
<span class="t" style="left:531.40px;top:705px;font-size:19.2px;color:#111111;letter-spacing:0.450px;">8000</span>
<span class="t" style="left:520.46px;top:644px;font-size:19.2px;color:#111111;letter-spacing:0.450px;">10000</span>
<span class="t" style="left:602.83px;top:986px;font-size:21.6px;color:#111111;">15 May</span>
<span class="t" style="left:857.88px;top:986px;font-size:21.6px;color:#111111;">Jun &#x27;22</span>
<span class="t" style="left:1067.00px;top:986px;font-size:21.6px;color:#111111;">15 Jun</span>
<span class="t" style="left:1308.37px;top:986px;font-size:21.6px;color:#111111;">Jul &#x27;22</span>
<span class="t" style="left:1518.36px;top:986px;font-size:21.6px;color:#111111;">15 Jul</span>
<span class="t" style="left:1765.21px;top:986px;font-size:21.6px;color:#111111;">Aug &#x27;22</span>
<span class="t" style="left:2164.15px;top:675px;font-size:25.2px;color:#3c21a8;letter-spacing:0.042px;">Errors</span>
<span class="t" style="left:2330.13px;top:675px;font-size:25.2px;color:#3c21a8;">Crashes</span>
<span class="t" style="left:2515.40px;top:675px;font-size:25.2px;color:#3c21a8;letter-spacing:0.103px;">More</span>
<span class="t" style="left:2109.47px;top:765px;font-size:27px;color:#22252a;letter-spacing:0.141px;">Errors by logs</span>
<span class="t" style="left:590.45px;top:1318px;font-size:21.6px;color:#222222;letter-spacing:1.988px;">NODE ID</span>
<span class="t" style="left:1509.40px;top:1318px;font-size:21.6px;color:#222222;letter-spacing:1.901px;">COUNT</span>
<span class="t" style="left:591.65px;top:1405px;font-size:25.2px;color:#333333;letter-spacing:-0.047px;">wx3vEoGgJPk7Rn5JvRUFs9</span>
<span class="t" style="left:1511.89px;top:1405px;font-size:25.2px;color:#7a7a7a;letter-spacing:1.042px;">25,428</span>
</body>
</html>
